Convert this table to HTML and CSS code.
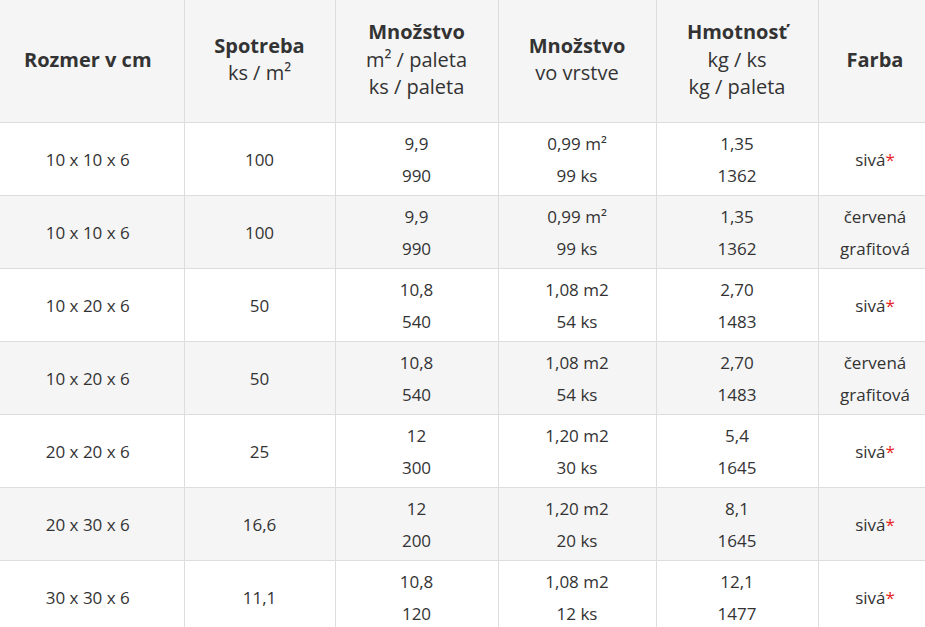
FILE: index.html
```
<!DOCTYPE html>
<html lang="sk">
<head>
<meta charset="utf-8">
<title>Tabuľka</title>
<link rel="stylesheet" href="styles.css">
</head>
<body>
<table class="spec">
  <colgroup>
    <col class="c1"><col class="c2"><col class="c3"><col class="c4"><col class="c5"><col class="c6">
  </colgroup>
  <thead>
    <tr>
      <th><strong>Rozmer v cm</strong></th>
      <th><strong>Spotreba</strong><br>ks / m²</th>
      <th><strong>Množstvo</strong><br>m² / paleta<br>ks / paleta</th>
      <th><strong>Množstvo</strong><br>vo vrstve</th>
      <th><strong>Hmotnosť</strong><br>kg / ks<br>kg / paleta</th>
      <th><strong>Farba</strong></th>
    </tr>
  </thead>
  <tbody>
    <tr><td>10 x 10 x 6</td><td>100</td><td>9,9<br>990</td><td>0,99 m²<br>99 ks</td><td>1,35<br>1362</td><td>sivá<span class="req">*</span></td></tr>
    <tr><td>10 x 10 x 6</td><td>100</td><td>9,9<br>990</td><td>0,99 m²<br>99 ks</td><td>1,35<br>1362</td><td>červená<br>grafitová</td></tr>
    <tr><td>10 x 20 x 6</td><td>50</td><td>10,8<br>540</td><td>1,08 m2<br>54 ks</td><td>2,70<br>1483</td><td>sivá<span class="req">*</span></td></tr>
    <tr><td>10 x 20 x 6</td><td>50</td><td>10,8<br>540</td><td>1,08 m2<br>54 ks</td><td>2,70<br>1483</td><td>červená<br>grafitová</td></tr>
    <tr><td>20 x 20 x 6</td><td>25</td><td>12<br>300</td><td>1,20 m2<br>30 ks</td><td>5,4<br>1645</td><td>sivá<span class="req">*</span></td></tr>
    <tr><td>20 x 30 x 6</td><td>16,6</td><td>12<br>200</td><td>1,20 m2<br>20 ks</td><td>8,1<br>1645</td><td>sivá<span class="req">*</span></td></tr>
    <tr><td>30 x 30 x 6</td><td>11,1</td><td>10,8<br>120</td><td>1,08 m2<br>12 ks</td><td>12,1<br>1477</td><td>sivá<span class="req">*</span></td></tr>
  </tbody>
</table>
</body>
</html>
```
FILE: styles.css
```
html, body {
  margin: 0;
  padding: 0;
  background: #ffffff;
}
body {
  font-family: "Open Sans", "Liberation Sans", sans-serif;
  color: #333333;
  overflow: hidden;
}
.spec {
  border-collapse: collapse;
  table-layout: fixed;
  width: 940px;
  margin-left: -8px;
}
.c1 { width: 192px; }
.c2 { width: 151px; }
.c3 { width: 163px; }
.c4 { width: 158px; }
.c5 { width: 162px; }
.c6 { width: 114px; }
.spec th,
.spec td {
  border: 1px solid #dddddd;
  text-align: center;
  vertical-align: middle;
}
.spec th {
  background: #f5f5f5;
  font-size: 20px;
  font-weight: 400;
  line-height: 27.5px;
  padding: 18px 6px 21px;
  border-top: none;
}
.spec th strong {
  font-weight: 700;
}
.spec td {
  font-size: 17px;
  line-height: 32px;
  padding: 5px 6px 3px;
}
.spec tbody tr:nth-child(even) td {
  background: #f5f5f5;
}
.spec th:first-child,
.spec td:first-child {
  border-left: none;
}
.req {
  color: #e61e1e;
}
```
